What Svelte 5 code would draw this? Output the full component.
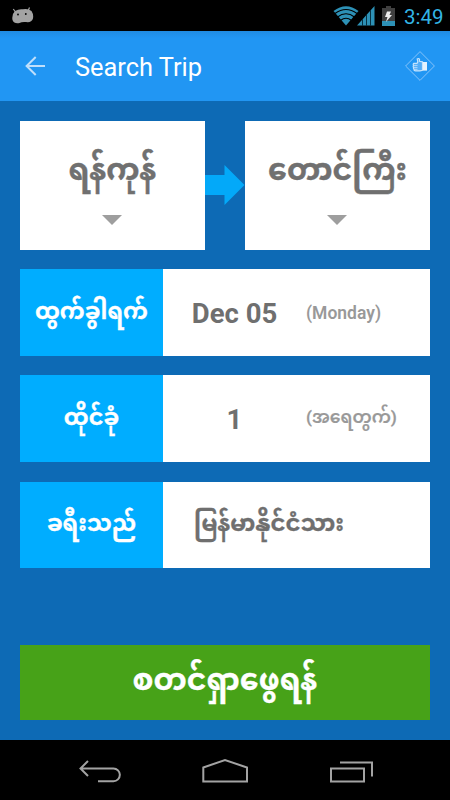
<script>
  const rows = [
    { kind: 'date', label: 'ထွက်ခွါရက်', value: 'Dec 05', note: '(Monday)' },
    { kind: 'seats', label: 'ထိုင်ခုံ', value: '1', note: '(အရေတွက်)' },
    { kind: 'nation', label: 'ခရီးသည်', value: 'မြန်မာနိုင်ငံသား' }
  ];
</script>

<div class="screen">
  <header class="status">
    <svg class="droid" width="22" height="17" viewBox="0 0 22 17">
      <path d="M1.300 2l2.200 3M17.500 .5l-1.500 3.500" stroke="#a3a3a3" stroke-width="1.200" />
      <path d="M3 4Q7 1.600 11 2.300Q16 1.300 19.500 4Q22 8 20.800 12Q19.500 15.800 14 15Q10 14.500 7.500 16Q2 17 .5 13Q-.5 7.500 3 4Z" fill="#a3a3a3" />
      <circle cx="6" cy="7.500" r=".9" fill="#000" /><circle cx="13.800" cy="7" r=".9" fill="#000" />
    </svg>
    <div class="indicators">
      <svg width="26" height="20" viewBox="0 0 26 20">
        <path d="M.5 5Q13-4.500 25.500 5L13 19.500Z" fill="#2d91b6" />
        <path d="M2 7.500Q13-.5 24 7.500M4.500 11Q13 4.500 21.500 11M7.500 14.500Q13 10 18.500 14.500" stroke="#000" stroke-width="1.100" fill="none" />
      </svg>
      <svg class="signal" width="18" height="20" viewBox="0 0 18 20">
        <path d="M0 19.500L17.500 0V19.500Z" fill="#2d91b6" />
        <path d="M5.500 13v7M9.500 9v11M13.500 4v16" stroke="#073244" stroke-width="1" />
      </svg>
      <svg class="battery" width="13" height="20" viewBox="0 0 13 20">
        <path d="M0 2h4V0h5v2h4v18H0z" fill="#404040" />
        <path d="M0 15h13v5H0z" fill="#2d91b6" />
        <path d="M5 5.500h4L7.500 9H10L4 16l1.500-5H3z" fill="#eee" />
      </svg>
      <span class="clock">3:49</span>
    </div>
  </header>

  <div class="bar">
    <svg class="back" width="20" height="20" viewBox="0 0 20 20" fill="none" stroke="#bfdffb" stroke-width="2">
      <path d="M10.700 1L1.600 10l9.100 9M1.600 10H20" />
    </svg>
    <h1>Search Trip</h1>
    <svg class="thumb" width="30" height="30" viewBox="0 0 30 30" fill="none">
      <path d="M15 .6L29.400 15 15 29.400.6 15z" stroke="#85c3f9" stroke-width="1" />
      <path d="M17.500 10.800l-3-.5V8.300q-.8-1.400-2.300-.4l.6 3.200-.8 1.200H8.800q-1.100.8-.3 2-.7 1 0 2-.4 1 .4 1.900 0 1.600 1.600 1.700h4.500l2.500-.6z" fill="#53adf8" stroke="#c6e3fc" stroke-width="1.200" />
      <path d="M8.500 14.400h4M8.500 16.400h4M9 18.300h3.500" stroke="#c6e3fc" stroke-width=".8" />
      <path d="M18 11h4v8.600h-4z" fill="#e3f2fe" />
    </svg>
  </div>

  <main>
    <div class="route">
      <div class="city"><span class="from">ရန်ကုန်</span><i></i></div>
      <svg width="40" height="40" viewBox="0 0 40 40"><path d="M0 10h19.500V0L39.500 20l-20 20V30H0z" fill="#03a9f9" /></svg>
      <div class="city"><span class="to">တောင်ကြီး</span><i></i></div>
    </div>
    {#each rows as row}
      <div class="row {row.kind}">
        <div class="label"><span>{row.label}</span></div>
        <div class="value">{row.value}</div>
        {#if row.note}<div class="note">{row.note}</div>{/if}
      </div>
    {/each}
    <button><span>စတင်ရှာဖွေရန်</span></button>
  </main>

  <nav>
    <svg width="450" height="60" viewBox="0 0 450 60" fill="none" stroke="#a3a3a3" stroke-width="2">
      <path d="M88 21l-7.500 7.500L88 36M81 28.500h32.500a6.300 6.300 0 0 1 0 12.700H98" />
      <path d="M203.300 41.500v-14L225 20l22 7.500v14z" />
      <path d="M331 28.500h33v13h-33zM340 22.500h32V36.500" />
    </svg>
  </nav>
</div>

<style>
  .screen { width: 450px; height: 800px; display: flex; flex-direction: column; overflow: hidden; background: #0d6ab5; font-family: Roboto, "Noto Sans Myanmar", "Noto Sans", sans-serif; }
  .status { height: 31px; flex: none; background: #000; display: flex; justify-content: space-between; padding: 0 8px 0 12px; box-sizing: border-box; }
  .droid { margin-top: 7px; }
  .indicators { display: flex; padding-top: 5.500px; height: 20px; }
  .signal { margin-left: -2px; }
  .battery { margin-left: 7px; }
  .clock { margin-left: 9px; width: 38px; color: #33b5e5; font-size: 20.500px; line-height: 23px; white-space: nowrap; }
  .bar { height: 70px; flex: none; display: flex; align-items: center; padding: 0 15px 0 25px; background: linear-gradient(#208be2, #2196f3 7px); }
  h1 { flex: 1; margin: 1px 0 0 30px; font-size: 25.400px; font-weight: 400; color: #fff; line-height: 32px; }
  main { flex: 1; padding: 20px; display: flex; flex-direction: column; }
  .route { display: flex; align-items: center; height: 128.500px; margin-bottom: 19.500px; }
  .city { flex: 1; height: 100%; background: #fff; display: flex; flex-direction: column; align-items: center; }
  .city span { box-sizing: border-box; height: 94px; padding-top: 2px; line-height: 94px; font-size: 30px; font-weight: 700; color: #707070; white-space: nowrap; -webkit-text-stroke: .4px #707070; }
  .city i { width: 0; height: 0; margin-right: 1px; border: 10px solid transparent; border-top-color: #9e9e9e; border-bottom: 0; }
  .row { height: 86.700px; margin-bottom: 19.600px; display: flex; align-items: center; background: #fff; }
  .label { box-sizing: border-box; width: 143px; height: 100%; padding-top: 3px; display: flex; align-items: center; justify-content: center; background: #00adff; color: #fff; font-size: 22.400px; font-weight: 700; white-space: nowrap; -webkit-text-stroke: .3px #fff; }
  .seats .label, .nation .label { padding-top: 1px; }
  .value { width: 143px; box-sizing: border-box; padding-top: 2px; color: #6f6f6f; font-size: 27.500px; font-weight: 700; text-align: center; white-space: nowrap; }
  .note { padding-top: 1px; color: #999; font-size: 17.500px; font-weight: 600; white-space: nowrap; }
  .seats .note { padding-top: 0; font-size: 17.200px; -webkit-text-stroke: .2px #999; }
  .nation .value { font-size: 22.800px; width: auto; padding-left: 31px; padding-top: 3px; -webkit-text-stroke: .3px #6f6f6f; }
  button { margin: auto 0 0; padding: 0; border: 0; height: 75px; background: #47a218; color: #fff; font: 700 30px Roboto, "Noto Sans Myanmar", sans-serif; -webkit-text-stroke: .3px #fff; }
  nav { height: 60px; flex: none; background: #000; }
</style>
